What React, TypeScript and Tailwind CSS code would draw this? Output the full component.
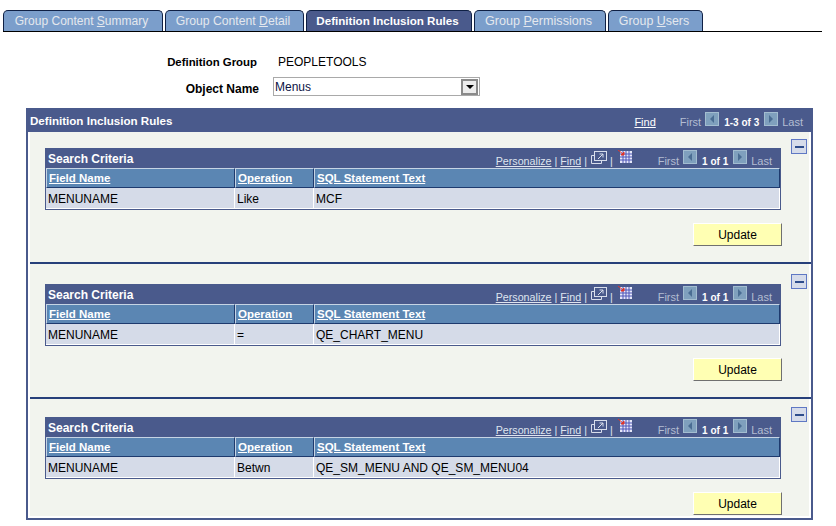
import React from "react";

const font = { fontFamily: '"Liberation Sans", Arial, sans-serif' };

function Tab({ w, size, active, pre, u, post }: { w: string; size: string; active?: boolean; pre: string; u?: string; post?: string }) {
  return (
    <div
      className={`${w} ${size} h-[21px] shrink-0 rounded-t-[5px] border-t border-l border-r border-[#0f2044] flex items-center justify-center pr-[3px] ${
        active ? "bg-[#4a5a8c] text-white font-bold" : "bg-[#7b9ecb] text-[#e4e8ee]"
      }`}
    >
      <span>
        {pre}
        {u ? <span className="underline">{u}</span> : null}
        {post}
      </span>
    </div>
  );
}

function NavBtn({ dir }: { dir: "l" | "r" }) {
  return (
    <svg width="14" height="14" viewBox="0 0 14 14" className="mx-[4px] mb-[8px] shrink-0">
      <rect width="14" height="14" fill="#8aa9c2" />
      <rect x="0.5" y="0.5" width="13" height="13" fill="#7fa0bd" stroke="#a3bdd0" />
      {dir === "l" ? <path d="M9 3v8L5 7z" fill="#4a6d93" /> : <path d="M5 3v8l4-4z" fill="#4a6d93" />}
    </svg>
  );
}

function Nav({ range }: { range: string }) {
  return (
    <div className="flex items-center text-[11px] text-[#b4bdd2]">
      <span>First</span>
      <NavBtn dir="l" />
      <span className="text-[10px] mx-[1px] font-bold text-white">{range}</span>
      <NavBtn dir="r" />
      <span>Last</span>
    </div>
  );
}

function HeadCell({ children, pl }: { children: React.ReactNode; pl: string }) {
  return (
    <div className={`h-[20px] bg-[#5b86b3] border-t border-t-[#c6d4e4] border-l border-l-[#c6d4e4] border-b border-b-[#1e3a6e] border-r border-r-[#1e3a6e] flex items-center ${pl} pt-[1px] font-bold text-[11.500px] text-white underline`}>
      {children}
    </div>
  );
}

function Grid({ rows }: { rows: [string, string, string] }) {
  return (
    <div className="w-[736px] border-x border-b border-[#4a5a8c]">
      <div className="h-[20px] bg-[#4a5a8c] flex items-center justify-between pl-[2px] pr-[8px]">
        <span className="text-[12px] font-bold text-white pt-[1px]">Search Criteria</span>
        <div className="flex items-center pt-[6px]">
          <div className="flex items-center text-[10.700px] text-[#dfe5ef]">
            <span className="underline">Personalize</span>
            <span className="mx-[3px]">|</span>
            <span className="underline">Find</span>
            <span className="mx-[3px]">|</span>
            <svg width="16" height="14" viewBox="0 0 16 14" className="ml-[1px] mb-[7px]" fill="none" stroke="#d8deec">
              <rect x="3.500" y="0.500" width="12" height="9" />
              <path d="M0.500 4.500h3M0.500 4.500v8h10v-3" />
              <path d="M7 8l5-5M8.500 3H12v3.500" />
            </svg>
            <span className="ml-[3px]">|</span>
            <svg width="14" height="14" viewBox="0 0 14 14" className="ml-[5px] mb-[8px]">
              <rect x="2" y="1" width="12" height="12" fill="#e6e8f8" />
              <path d="M2 4h12M2 7h12M2 10h12M5 1v12M8 1v12M11 1v12" stroke="#4c55b8" strokeWidth="1" />
              <path d="M0 0l5 4M3 5h3V2z" stroke="#e0342a" fill="#e0342a" strokeWidth="1" />
            </svg>
          </div>
          <div className="ml-[26px]">
            <Nav range="1 of 1" />
          </div>
        </div>
      </div>
      <div className="grid grid-cols-[189px_79px_466px]">
        <HeadCell pl="pl-[2px]">Field Name</HeadCell>
        <HeadCell pl="pl-[2px]">Operation</HeadCell>
        <HeadCell pl="pl-[2px]">SQL Statement Text</HeadCell>
        {rows.map((t, i) => (
          <div key={i} className="h-[21px] bg-[#d5dbe8] border-r border-b border-white flex items-center pl-[2px] pt-[1px] text-[12px] text-black">
            {t}
          </div>
        ))}
      </div>
    </div>
  );
}

function Section({ rows, h, pt, btnMt, top, border }: { rows: [string, string, string]; h: string; pt: string; btnMt: string; top: string; border?: boolean }) {
  return (
    <div className={`${h} ${border ? "border-b-2 border-[#27407a]" : ""}`}>
      <div className={`h-full ${pt} mr-[2px] relative bg-[#f2f4ee] pl-[15px]`}>
        <Grid rows={rows} />
        <div className={`${btnMt} ml-[648px] w-[89px] h-[23px] bg-[#ffffb3] border border-t-white border-l-white border-r-[#707070] border-b-[#707070] flex items-center justify-center text-[12px] text-black`}>
          Update
        </div>
        <div className={`absolute right-[2px] ${top} w-[16px] h-[15px] border border-[#5f78c4] bg-[#d6dcea] flex items-center justify-center`}>
          <div className="w-[9px] h-[2px] bg-[#2e4d8c]" />
        </div>
      </div>
    </div>
  );
}

export default function App() {
  return (
    <div style={font} className="w-[836px] h-[526px] bg-white overflow-hidden">
      <div className="pt-[10px] pl-[3px]">
        <div className="w-[819px] h-[22px] border-b border-black flex items-start gap-[2px]">
          <Tab w="w-[160px]" size="text-[12px]" pre="Group Content " u="S" post="ummary" />
          <Tab w="w-[139px]" size="text-[12.200px]" pre="Group Content " u="D" post="etail" />
          <Tab w="w-[166px]" size="text-[11.600px]" active pre="Definition Inclusion Rules" />
          <Tab w="w-[132px]" size="text-[12.600px]" pre="Group " u="P" post="ermissions" />
          <Tab w="w-[95px]" size="text-[12.400px]" pre="Group " u="U" post="sers" />
        </div>
      </div>
      <div className="mt-[20px] h-[19px] flex items-center text-[12px] text-black pt-[1px]">
        <div className="w-[257px] text-right font-bold text-[11.400px] pb-[1px] -mb-[1px] pt-[1px]">Definition Group</div>
        <div className="ml-[21px]">PEOPLETOOLS</div>
      </div>
      <div className="mt-[6px] h-[19px] flex items-center text-[12px] text-black">
        <div className="w-[259px] text-right font-bold pt-[5px]">Object Name</div>
        <div className="ml-[14px] w-[207px] h-[19px] border border-[#a9a9a9] flex items-center justify-between pl-[1px] pr-[1px] text-[#0c1445]">
          <span>Menus</span>
          <div className="w-[17px] h-[16px] border-2 border-[#8a8a8a] bg-[#ececec] flex items-center justify-center">
            <svg width="8" height="4" viewBox="0 0 8 4"><path d="M0 0h8L4 4z" fill="#000" /></svg>
          </div>
        </div>
      </div>
      <div className="mt-[12px] ml-[26px] w-[787px] h-[412px] border-x-2 border-b-2 border-[#4a5a8c] bg-white">
        <div className="h-[24px] -mx-[2px] bg-[#4a5a8c] flex items-center justify-between pl-[4px] pr-[10px]">
          <span className="text-[11.600px] font-bold text-white pt-[1px]">Definition Inclusion Rules</span>
          <div className="flex items-center pt-[5px]">
            <span className="text-[11px] text-white underline mr-[24px]">Find</span>
            <Nav range="1-3 of 3" />
          </div>
        </div>
        <div className="pl-[2px]">
          <Section rows={["MENUNAME", "Like", "MCF"]} h="h-[132px]" pt="pt-[16px]" btnMt="mt-[13px]" top="top-[7px]" border />
          <Section rows={["MENUNAME", "=", "QE_CHART_MENU"]} h="h-[135px]" pt="pt-[20px]" btnMt="mt-[12px]" top="top-[10px]" border />
          <Section rows={["MENUNAME", "Betwn", "QE_SM_MENU AND QE_SM_MENU04"]} h="h-[117px]" pt="pt-[18px]" btnMt="mt-[13px]" top="top-[8px]" />
        </div>
      </div>
    </div>
  );
}
